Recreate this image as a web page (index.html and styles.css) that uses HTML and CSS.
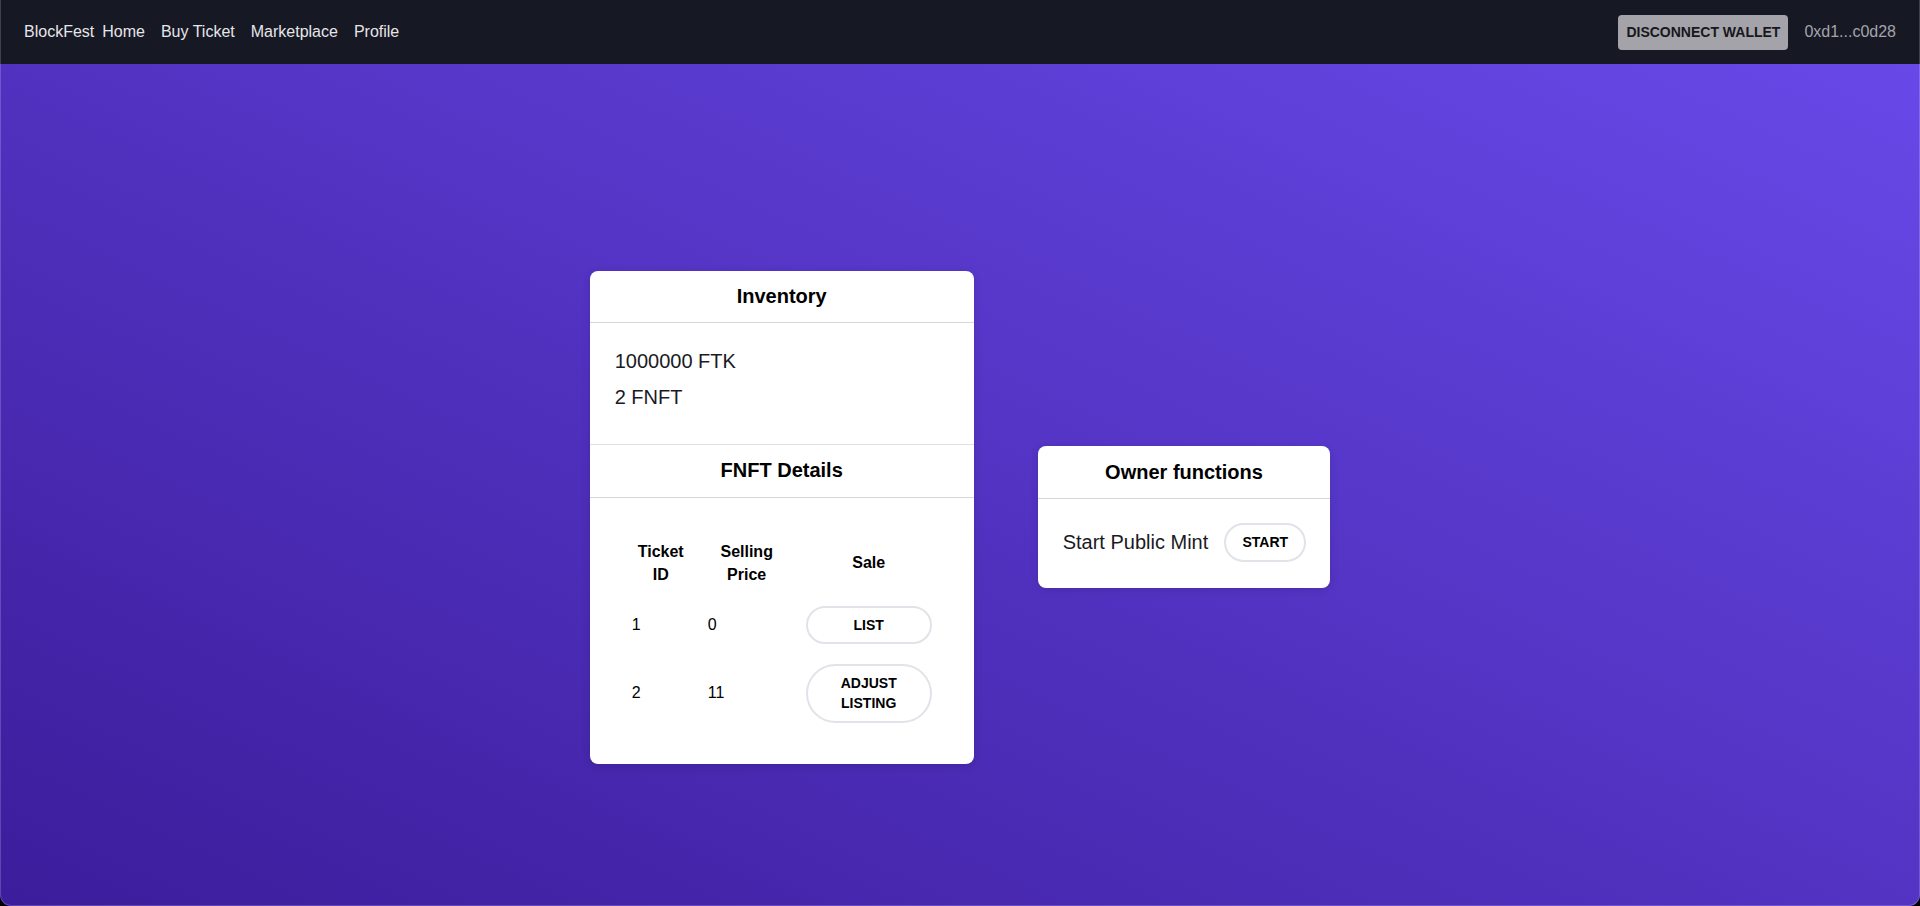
FILE: index.html
```html
<!DOCTYPE html>
<html lang="en">
<head>
<meta charset="utf-8">
<title>BlockFest</title>
<link rel="stylesheet" href="styles.css">
</head>
<body>
<div class="window">
  <nav class="navbar">
    <div class="nav-left">
      <span class="brand">BlockFest</span>
      <a class="nav-link" href="#">Home</a>
      <a class="nav-link" href="#">Buy Ticket</a>
      <a class="nav-link" href="#">Marketplace</a>
      <a class="nav-link" href="#">Profile</a>
    </div>
    <div class="nav-right">
      <button class="wallet-btn">DISCONNECT WALLET</button>
      <span class="address">0xd1...c0d28</span>
    </div>
  </nav>
  <main class="main">
    <section class="card inventory-card">
      <h2 class="card-header">Inventory</h2>
      <div class="inv-body">
        <p class="inv-line">1000000 FTK</p>
        <p class="inv-line">2 FNFT</p>
      </div>
      <h2 class="card-header bordered-top">FNFT Details</h2>
      <div class="table-body">
        <table class="fnft-table">
          <colgroup>
            <col class="col-id">
            <col class="col-price">
            <col class="col-sale">
          </colgroup>
          <thead>
            <tr>
              <th>Ticket<br>ID</th>
              <th>Selling<br>Price</th>
              <th>Sale</th>
            </tr>
          </thead>
          <tbody>
            <tr>
              <td class="td-id">1</td>
              <td class="td-price">0</td>
              <td class="td-sale"><button class="pill-btn">LIST</button></td>
            </tr>
            <tr>
              <td class="td-id">2</td>
              <td class="td-price">11</td>
              <td class="td-sale"><button class="pill-btn two-line">ADJUST LISTING</button></td>
            </tr>
          </tbody>
        </table>
      </div>
    </section>
    <section class="card owner-card">
      <h2 class="card-header owner-header">Owner functions</h2>
      <div class="owner-body">
        <span class="owner-label">Start Public Mint</span>
        <button class="pill-btn start-btn">START</button>
      </div>
    </section>
  </main>
  <div class="window-frame"></div>
</div>
</body>
</html>
```

FILE: styles.css
```css
* {
  box-sizing: border-box;
}

html {
  background: #000;
}

body {
  margin: 0;
  font-family: "Liberation Sans", Arial, Helvetica, sans-serif;
  background: #000;
}

.window {
  position: relative;
  width: 1920px;
  height: 906px;
  overflow: hidden;
  border-radius: 0 0 11px 11px;
  background: #161823;
}

.window-frame {
  position: absolute;
  inset: 0;
  border: 1px solid rgba(255, 255, 255, 0.18);
  border-top: none;
  border-radius: 0 0 11px 11px;
  pointer-events: none;
}

.navbar {
  height: 64px;
  background: #161823;
  display: flex;
  align-items: center;
  justify-content: space-between;
  padding: 0 24px;
}

.nav-left {
  display: flex;
  align-items: center;
  font-size: 16px;
  color: #e6e6ea;
}

.brand {
  margin-right: 8px;
}

.nav-link {
  color: #e6e6ea;
  text-decoration: none;
  margin-right: 16px;
}

.nav-right {
  display: flex;
  align-items: center;
  gap: 16px;
}

.wallet-btn {
  height: 35px;
  width: 170px;
  padding: 0;
  border: none;
  border-radius: 4px;
  background: #a3a3a9;
  color: #17171c;
  font-family: "Liberation Sans", Arial, sans-serif;
  font-weight: 700;
  font-size: 14px;
}

.address {
  color: #a4a4ac;
  font-size: 16px;
}

.main {
  height: 906px;
  display: flex;
  align-items: center;
  justify-content: center;
  gap: 64px;
  background: linear-gradient(to top right, #3a1b98, #6849e8);
}

.card {
  background: #fff;
  border-radius: 8px;
  box-shadow: 0 2px 8px rgba(0, 0, 0, 0.12);
  color: #000;
}

.inventory-card {
  width: 384px;
}

.card-header {
  margin: 0;
  height: 52px;
  display: flex;
  align-items: center;
  justify-content: center;
  font-size: 20px;
  font-weight: 700;
  border-bottom: 1px solid #d6d6de;
}

.owner-header {
  height: 53px;
}

.bordered-top {
  height: 54px;
  border-top: 1px solid #dedee4;
}

.inv-body {
  padding: 20px 25px 29px;
}

.inv-line {
  margin: 0;
  font-size: 20px;
  line-height: 36px;
  color: #1a1a24;
}

.table-body {
  padding: 32px 22px 31px 24px;
}

.fnft-table {
  border-collapse: collapse;
  table-layout: fixed;
  width: 338px;
}

.col-id {
  width: 94px;
}

.col-price {
  width: 78px;
}

.col-sale {
  width: 166px;
}

.fnft-table th {
  font-size: 16px;
  font-weight: 700;
  line-height: 23px;
  text-align: center;
  padding: 10px 0;
  vertical-align: middle;
}

.fnft-table td {
  font-size: 16px;
  padding: 10px 0;
  vertical-align: middle;
}

.td-id {
  padding-left: 18px !important;
}

.td-price {
  padding-left: 0;
}

.td-sale {
  text-align: center;
}

.pill-btn {
  width: 126px;
  padding: 7px 12px;
  border: 2px solid #e2e2e9;
  border-radius: 9999px;
  background: #fff;
  color: #000;
  font-family: "Liberation Sans", Arial, sans-serif;
  font-weight: 700;
  font-size: 14px;
  line-height: 20px;
}

.two-line {
  padding: 7px 12px 8px;
}

.owner-body {
  display: flex;
  align-items: center;
  gap: 16px;
  padding: 24px 24px 26px 25px;
}

.owner-label {
  font-size: 20px;
  color: #1a1a24;
}

.start-btn {
  width: 82px;
  padding: 8px 0;
  line-height: 19px;
}
```
